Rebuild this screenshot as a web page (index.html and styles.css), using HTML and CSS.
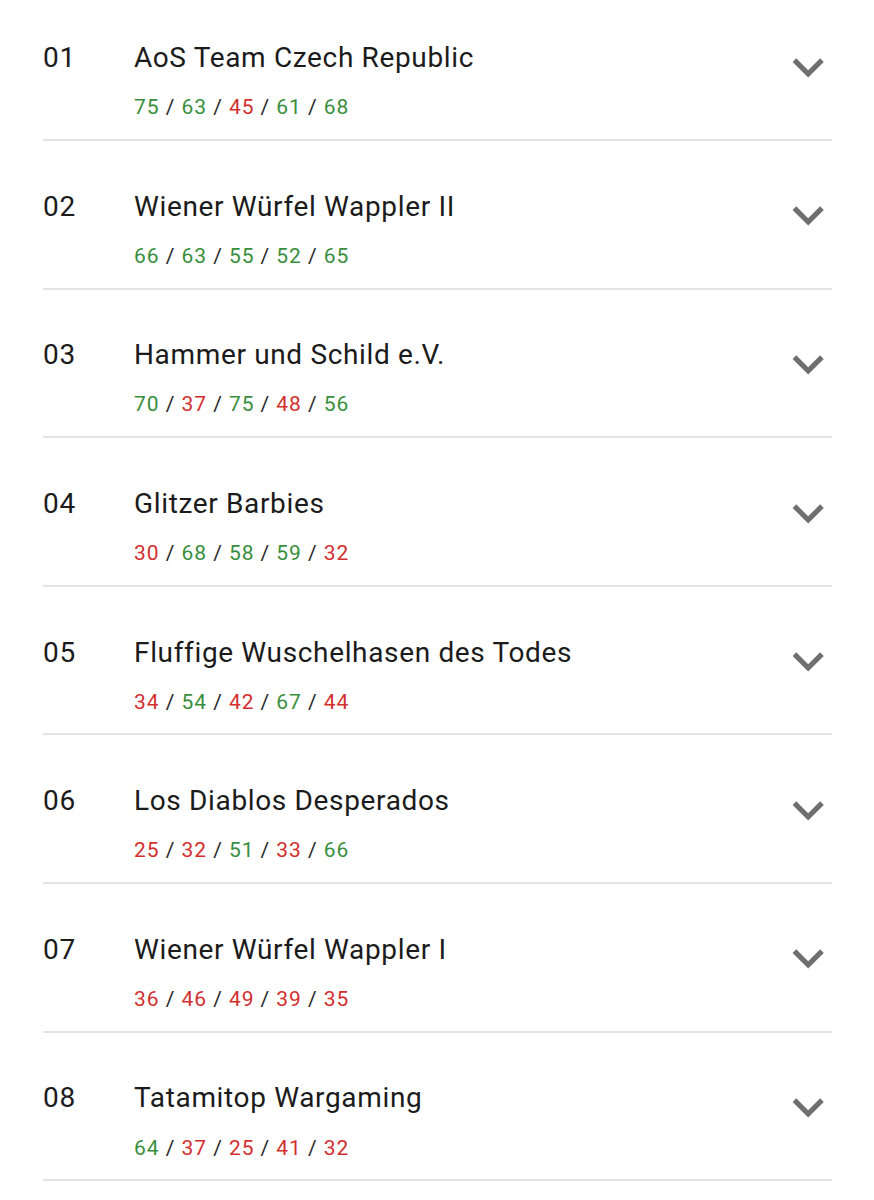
FILE: index.html
```html
<!DOCTYPE html>
<html lang="de">
<head>
<meta charset="utf-8">
<title>Rangliste</title>
<link rel="stylesheet" href="styles.css">
</head>
<body>
<ul class="list">
  <li class="row">
    <span class="rank">01</span>
    <div class="main">
      <div class="title">AoS Team Czech Republic</div>
      <div class="scores"><span class="g">75</span> / <span class="g">63</span> / <span class="r">45</span> / <span class="g">61</span> / <span class="g">68</span></div>
    </div>
    <svg class="chev" viewBox="0 0 24 24"><path d="M16.59 8.59L12 13.17 7.41 8.59 6 10l6 6 6-6z"/></svg>
  </li>
  <li class="row">
    <span class="rank">02</span>
    <div class="main">
      <div class="title">Wiener Würfel Wappler II</div>
      <div class="scores"><span class="g">66</span> / <span class="g">63</span> / <span class="g">55</span> / <span class="g">52</span> / <span class="g">65</span></div>
    </div>
    <svg class="chev" viewBox="0 0 24 24"><path d="M16.59 8.59L12 13.17 7.41 8.59 6 10l6 6 6-6z"/></svg>
  </li>
  <li class="row">
    <span class="rank">03</span>
    <div class="main">
      <div class="title">Hammer und Schild e.V.</div>
      <div class="scores"><span class="g">70</span> / <span class="r">37</span> / <span class="g">75</span> / <span class="r">48</span> / <span class="g">56</span></div>
    </div>
    <svg class="chev" viewBox="0 0 24 24"><path d="M16.59 8.59L12 13.17 7.41 8.59 6 10l6 6 6-6z"/></svg>
  </li>
  <li class="row">
    <span class="rank">04</span>
    <div class="main">
      <div class="title">Glitzer Barbies</div>
      <div class="scores"><span class="r">30</span> / <span class="g">68</span> / <span class="g">58</span> / <span class="g">59</span> / <span class="r">32</span></div>
    </div>
    <svg class="chev" viewBox="0 0 24 24"><path d="M16.59 8.59L12 13.17 7.41 8.59 6 10l6 6 6-6z"/></svg>
  </li>
  <li class="row">
    <span class="rank">05</span>
    <div class="main">
      <div class="title">Fluffige Wuschelhasen des Todes</div>
      <div class="scores"><span class="r">34</span> / <span class="g">54</span> / <span class="r">42</span> / <span class="g">67</span> / <span class="r">44</span></div>
    </div>
    <svg class="chev" viewBox="0 0 24 24"><path d="M16.59 8.59L12 13.17 7.41 8.59 6 10l6 6 6-6z"/></svg>
  </li>
  <li class="row">
    <span class="rank">06</span>
    <div class="main">
      <div class="title">Los Diablos Desperados</div>
      <div class="scores"><span class="r">25</span> / <span class="r">32</span> / <span class="g">51</span> / <span class="r">33</span> / <span class="g">66</span></div>
    </div>
    <svg class="chev" viewBox="0 0 24 24"><path d="M16.59 8.59L12 13.17 7.41 8.59 6 10l6 6 6-6z"/></svg>
  </li>
  <li class="row">
    <span class="rank">07</span>
    <div class="main">
      <div class="title">Wiener Würfel Wappler I</div>
      <div class="scores"><span class="r">36</span> / <span class="r">46</span> / <span class="r">49</span> / <span class="r">39</span> / <span class="r">35</span></div>
    </div>
    <svg class="chev" viewBox="0 0 24 24"><path d="M16.59 8.59L12 13.17 7.41 8.59 6 10l6 6 6-6z"/></svg>
  </li>
  <li class="row">
    <span class="rank">08</span>
    <div class="main">
      <div class="title">Tatamitop Wargaming</div>
      <div class="scores"><span class="g">64</span> / <span class="r">37</span> / <span class="r">25</span> / <span class="r">41</span> / <span class="r">32</span></div>
    </div>
    <svg class="chev" viewBox="0 0 24 24"><path d="M16.59 8.59L12 13.17 7.41 8.59 6 10l6 6 6-6z"/></svg>
  </li>
</ul>
</body>
</html>
```
FILE: styles.css
```css
html, body {
  margin: 0;
  padding: 0;
  background: #ffffff;
}
body {
  font-family: Roboto, "Noto Sans", sans-serif;
  color: #1b1b1b;
}
.list {
  list-style: none;
  margin: 0 42px 0 43px;
  padding: 0;
}
.row {
  display: flex;
  align-items: flex-start;
  padding: 48.65px 0 17.8px 0;
  border-bottom: 2px solid #e3e3e3;
}
.row:first-child {
  padding-top: 41px;
}
.rank {
  width: 91px;
  flex: none;
  font-size: 28px;
  line-height: 34px;
  letter-spacing: 0.65px;
}
.main {
  flex: 1;
  display: flex;
  flex-direction: column;
  gap: 18.2px;
}
.title {
  font-size: 28px;
  line-height: 34px;
  letter-spacing: 0.65px;
}
.scores {
  font-size: 21px;
  line-height: 28px;
  letter-spacing: 0.95px;
  color: #2a2a2a;
}
.g { color: #388e3c; }
.r { color: #d32f2f; }
.chev {
  flex: none;
  width: 62.4px;
  height: 62.4px;
  margin: -5.3px -7px 0 0;
  fill: #6f6f6f;
}
```
